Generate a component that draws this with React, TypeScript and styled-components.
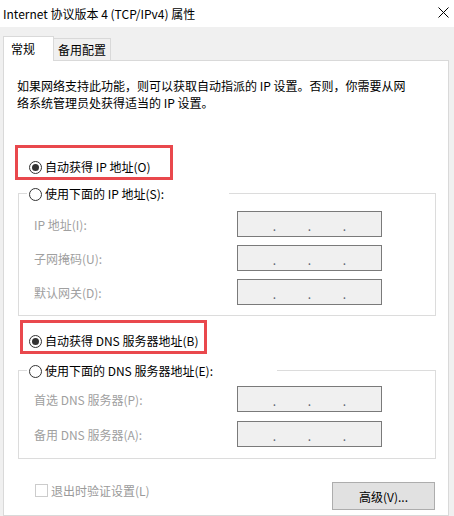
import React from "react";
import styled, { createGlobalStyle } from "styled-components";

const GlobalStyle = createGlobalStyle`
  html, body {
    margin: 0;
    padding: 0;
    width: 454px;
    height: 516px;
    overflow: hidden;
    background: #f0f0f0;
  }
  body {
    font-family: "Noto Sans CJK SC", "Microsoft YaHei", sans-serif;
    font-size: 12px;
    color: #000;
  }
  * { box-sizing: border-box; }
`;

const Window = styled.div`
  width: 454px;
  height: 516px;
  display: flex;
  flex-direction: column;
  background: #f0f0f0;
  overflow: hidden;
`;

const TitleBar = styled.div`
  height: 27px;
  flex: none;
  background: #fff;
  display: flex;
  align-items: center;
  justify-content: space-between;
  padding: 0 5px 0 3px;
  line-height: 17px;
`;

const Title = styled.span`
  white-space: nowrap;
`;

const CloseIcon = styled.svg`
  width: 11px;
  height: 11px;
  margin-bottom: 2px;
`;

const Content = styled.div`
  flex: 1;
  display: flex;
  flex-direction: column;
  padding: 9px 5px 0 3px;
  min-height: 0;
`;

const TabStrip = styled.div`
  display: flex;
  align-items: flex-end;
  height: 25px;
  margin-bottom: -1px;
  position: relative;
  z-index: 1;
`;

const Tab = styled.div<{ $active?: boolean; $width: number }>`
  width: ${(p) => p.$width}px;
  height: ${(p) => (p.$active ? 25 : 22)}px;
  margin-bottom: ${(p) => (p.$active ? 0 : 1)}px;
  background: ${(p) => (p.$active ? "#fff" : "#f0f0f0")};
  border: 1px solid #d9d9d9;
  border-bottom: none;
  ${(p) => (p.$active ? "" : "border-left: none;")}
  display: flex;
  align-items: center;
  justify-content: ${(p) => (p.$active ? "flex-start" : "center")};
  padding: ${(p) => (p.$active ? "0 0 1px 7px" : "0")};
  line-height: 17px;
  white-space: nowrap;
`;

const Panel = styled.div`
  flex: 1;
  background: #fff;
  border: 1px solid #d9d9d9;
  display: flex;
  flex-direction: column;
  align-items: flex-start;
  min-height: 0;
`;

const Description = styled.p`
  margin: 16px 0 0 13px;
  line-height: 17px;
  white-space: nowrap;
`;

const Highlight = styled.div<{ $mt: number; $ml: number; $pad: string }>`
  margin: ${(p) => p.$mt}px 0 0 ${(p) => p.$ml}px;
  border: 3px solid #e9484d;
  padding: ${(p) => p.$pad};
  display: flex;
`;

const RadioRow = styled.label`
  display: flex;
  align-items: center;
  gap: 3px;
  height: 17px;
  line-height: 17px;
  white-space: nowrap;
`;

const RadioCircle = styled.span<{ $checked?: boolean }>`
  width: 13px;
  height: 13px;
  flex: none;
  margin-top: 2px;
  border-radius: 50%;
  border: 1px solid #333;
  background: #fff;
  display: flex;
  align-items: center;
  justify-content: center;
  &::after {
    content: "";
    width: 7px;
    height: 7px;
    border-radius: 50%;
    background: ${(p) => (p.$checked ? "#333" : "transparent")};
  }
`;

const Group = styled.fieldset<{ $mt: number; $pt: number; $pb: number }>`
  margin: ${(p) => p.$mt}px 0 0 14px;
  width: 418px;
  border: 1px solid #dcdcdc;
  padding: ${(p) => p.$pt}px 0 ${(p) => p.$pb}px 0;
  min-width: 0;
`;

const Legend = styled.legend<{ $width: number }>`
  margin-left: 8px;
  padding: 0 0 0 2px;
  width: ${(p) => p.$width}px;
  line-height: 17px;
`;

const FieldGrid = styled.div<{ $gap: number }>`
  display: grid;
  grid-template-columns: 203px 145px;
  grid-auto-rows: 26px;
  row-gap: ${(p) => p.$gap}px;
  align-items: center;
  padding-left: 15px;
`;

const FieldLabel = styled.span`
  color: #a0a0a0;
  line-height: 17px;
  white-space: nowrap;
`;

const IpBox = styled.div`
  height: 26px;
  border: 1px solid #7a7a7a;
  background: #f0f0f0;
  display: flex;
  align-items: center;
  justify-content: center;
  gap: 33px;
`;

const IpDot = styled.span`
  width: 2px;
  display: flex;
  justify-content: center;
  color: #5c6470;
  font-size: 12px;
  line-height: 12px;
  padding-top: 3px;
`;

const Footer = styled.div`
  margin-top: 23px;
  align-self: stretch;
  display: flex;
  justify-content: space-between;
  align-items: flex-start;
  padding: 0 13px 0 31px;
`;

const CheckRow = styled.label`
  display: flex;
  align-items: center;
  gap: 3px;
  height: 17px;
  color: #9a9a9a;
  line-height: 17px;
  white-space: nowrap;
`;

const CheckBox = styled.span`
  width: 13px;
  height: 13px;
  flex: none;
  border: 1px solid #cccccc;
  background: #fff;
`;

const Button = styled.button`
  width: 103px;
  height: 28px;
  border: 1px solid #adadad;
  background: #e1e1e1;
  font-family: inherit;
  font-size: 12px;
  color: #000;
  padding: 0;
  line-height: 17px;
`;

const IpField: React.FC<{ label: string }> = ({ label }) => (
  <>
    <FieldLabel>{label}</FieldLabel>
    <IpBox>
      <IpDot>.</IpDot>
      <IpDot>.</IpDot>
      <IpDot>.</IpDot>
    </IpBox>
  </>
);

const Radio: React.FC<{ checked?: boolean; children: React.ReactNode }> = ({ checked, children }) => (
  <RadioRow>
    <RadioCircle $checked={checked} />
    <span>{children}</span>
  </RadioRow>
);

export default function App() {
  return (
    <Window>
      <GlobalStyle />
      <TitleBar>
        <Title>Internet 协议版本 4 (TCP/IPv4) 属性</Title>
        <CloseIcon viewBox="0 0 11 11">
          <path d="M0.5 0.5 L10.5 10.5 M10.5 0.5 L0.5 10.5" stroke="#000" strokeWidth="1" fill="none" />
        </CloseIcon>
      </TitleBar>
      <Content>
        <TabStrip>
          <Tab $active $width={51}>常规</Tab>
          <Tab $width={57}>备用配置</Tab>
        </TabStrip>
        <Panel>
          <Description>
            如果网络支持此功能，则可以获取自动指派的 IP 设置。否则，你需要从网
            <br />
            络系统管理员处获得适当的 IP 设置。
          </Description>

          <Highlight $mt={34} $ml={11} $pad="10px 19px 2px 11px">
            <Radio checked>自动获得 IP 地址(O)</Radio>
          </Highlight>

          <Group $mt={5} $pt={9} $pb={10}>
            <Legend $width={202}>
              <Radio>使用下面的 IP 地址(S):</Radio>
            </Legend>
            <FieldGrid $gap={8}>
              <IpField label="IP 地址(I):" />
              <IpField label="子网掩码(U):" />
              <IpField label="默认网关(D):" />
            </FieldGrid>
          </Group>

          <Highlight $mt={4} $ml={16} $pad="9px 6px 2px 6px">
            <Radio checked>自动获得 DNS 服务器地址(B)</Radio>
          </Highlight>

          <Group $mt={8} $pt={7} $pb={11}>
            <Legend $width={250}>
              <Radio>使用下面的 DNS 服务器地址(E):</Radio>
            </Legend>
            <FieldGrid $gap={9}>
              <IpField label="首选 DNS 服务器(P):" />
              <IpField label="备用 DNS 服务器(A):" />
            </FieldGrid>
          </Group>

          <Footer>
            <CheckRow>
              <CheckBox />
              <span>退出时验证设置(L)</span>
            </CheckRow>
            <Button>高级(V)...</Button>
          </Footer>
        </Panel>
      </Content>
    </Window>
  );
}
